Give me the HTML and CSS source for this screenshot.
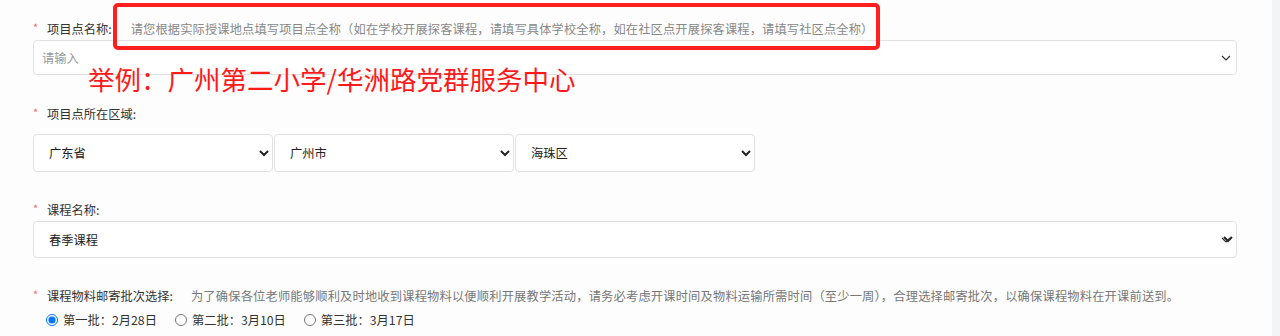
FILE: index.html
```html
<!DOCTYPE html>
<html lang="zh-CN">

<head>
  <meta charset="UTF-8">
  <meta name="viewport" content="width=device-width, initial-scale=1.0">
  <title>项目点信息填写</title>
  <link rel="stylesheet" href="styles.css">
</head>

<body>
  <div class="page">
    <main class="content">
      <form class="form">
        <!-- 项目点名称 -->
        <div class="field field-name">
          <div class="label"><span class="req">*</span>项目点名称:<span class="hint">请您根据实际授课地点填写项目点全称（如在学校开展探客课程，请填写具体学校全称，如在社区点开展探客课程，请填写社区点全称）</span></div>
          <div class="combo">
            <input type="text" class="control" placeholder="请输入">
            <svg class="chevron" width="10" height="6" viewBox="0 0 10 6"><polyline points="1,1 5,5 9,1" fill="none" stroke="#333" stroke-width="1.2"/></svg>
          </div>
          <div class="mark-box"></div>
          <div class="mark-text">举例：广州第二小学/华洲路党群服务中心</div>
        </div>

        <!-- 区域 -->
        <div class="field">
          <div class="label label-wide"><span class="req">*</span>项目点所在区域:</div>
          <div class="region">
            <select class="control select"><option>广东省</option></select>
            <select class="control select"><option>广州市</option></select>
            <select class="control select"><option>海珠区</option></select>
          </div>
        </div>

        <!-- 课程名称 -->
        <div class="field">
          <div class="label"><span class="req">*</span>课程名称:</div>
          <div class="combo">
            <select class="control select select-course"><option>春季课程</option></select>
            <svg class="chevron" width="10" height="6" viewBox="0 0 10 6"><polyline points="1,1 5,5 9,1" fill="none" stroke="#333" stroke-width="1.2"/></svg>
          </div>
        </div>

        <!-- 邮寄批次 -->
        <div class="field">
          <div class="label label-batch"><span class="req">*</span>课程物料邮寄批次选择:<span class="hint desc">为了确保各位老师能够顺利及时地收到课程物料以便顺利开展教学活动，请务必考虑开课时间及物料运输所需时间（至少一周），合理选择邮寄批次，以确保课程物料在开课前送到。</span></div>
          <div class="radios">
            <label class="radio"><input type="radio" name="batch" checked>第一批：2月28日</label>
            <label class="radio"><input type="radio" name="batch">第二批：3月10日</label>
            <label class="radio"><input type="radio" name="batch">第三批：3月17日</label>
          </div>
        </div>
      </form>
    </main>
    <div class="scrollbar"></div>
  </div>
</body>

</html>
```

FILE: styles.css
```css
body {
  margin: 0;
  font-family: "Noto Sans CJK SC", "Microsoft YaHei", sans-serif;
  font-size: 12.25px;
  color: #333;
  background: #fdfdfd;
}

.page {
  display: flex;
  height: 336px;
  overflow: hidden;
}

.content {
  flex: 1;
  padding: 20px 0 0 33px;
}

.scrollbar {
  width: 8px;
  background: #f3f4f6;
}

.form {
  width: 1204px;
}

.field {
  position: relative;
  margin-bottom: 29px;
}

.field-name {
  margin-bottom: 30px;
}

.label {
  line-height: 18px;
  height: 18px;
  margin-bottom: 2px;
  white-space: nowrap;
}

.label-wide {
  margin-bottom: 11px;
}

.label-batch {
  margin-bottom: 6px;
}

.req {
  display: inline-block;
  width: 14px;
  color: #f56c6c;
  font-size: 11px;
  vertical-align: top;
  line-height: 14px;
}

.hint {
  margin-left: 19px;
  color: #888;
  letter-spacing: 0.13px;
}

.desc {
  margin-left: 18px;
  color: #777;
  letter-spacing: 0.18px;
}

.combo {
  position: relative;
}

.control {
  display: block;
  box-sizing: border-box;
  width: 100%;
  height: 35px;
  padding: 0 8px;
  border: 1px solid #e1e1e1;
  border-radius: 4px;
  background: #fff;
  font-family: inherit;
  font-size: 12.25px;
  color: #222;
  outline: none;
}

.control::placeholder {
  color: #999;
}

.select {
  height: 38px;
  padding-left: 11px;
}

.select-course {
  height: 37px;
}

.chevron {
  position: absolute;
  right: 6px;
  top: 50%;
  margin-top: -3px;
  pointer-events: none;
}

.region {
  display: flex;
  gap: 1px;
  width: 722px;
}

.region .select {
  flex: 1;
  width: auto;
}

.mark-box {
  position: absolute;
  left: 80px;
  top: -17px;
  width: 767px;
  height: 47px;
  box-sizing: border-box;
  border: 4px solid #ff1f1f;
  border-radius: 5px;
  pointer-events: none;
}

.mark-text {
  position: absolute;
  left: 55px;
  top: 44px;
  font-size: 26.5px;
  line-height: 30px;
  color: #ff1a1a;
  white-space: nowrap;
  pointer-events: none;
}

.radios {
  display: flex;
  gap: 18px;
  padding-left: 13px;
}

.radio {
  display: flex;
  align-items: center;
  line-height: 18px;
  color: #333;
}

.radio input {
  margin: 0 5px 0 0;
  width: 12px;
  height: 12px;
}
```
